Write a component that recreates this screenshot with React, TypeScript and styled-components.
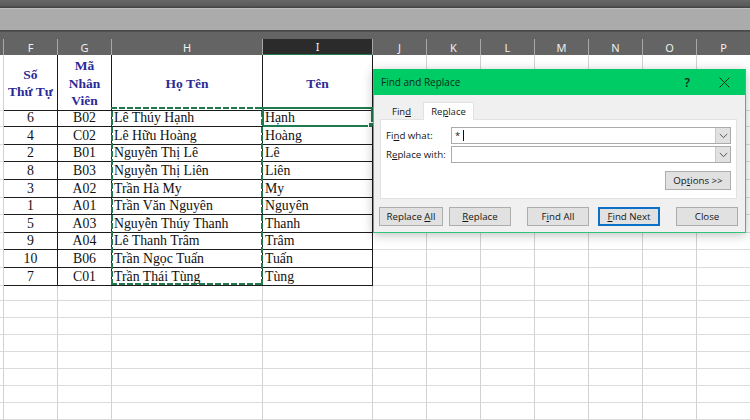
import React from 'react'
import styled, { createGlobalStyle } from 'styled-components'

const COLUMNS = '4px 54px 54px 151px 110px 54px 54px 54px 54px 54px 54px 54px'

const HEADERS = ['', 'F', 'G', 'H', 'I', 'J', 'K', 'L', 'M', 'N', 'O', 'P']

const PEOPLE = [
  ['6', 'B02', 'Lê Thúy Hạnh', 'Hạnh'],
  ['4', 'C02', 'Lê Hữu Hoàng', 'Hoàng'],
  ['2', 'B01', 'Nguyễn Thị Lê', 'Lê'],
  ['8', 'B03', 'Nguyễn Thị Liên', 'Liên'],
  ['3', 'A02', 'Trần Hà My', 'My'],
  ['1', 'A01', 'Trần Văn Nguyên', 'Nguyên'],
  ['5', 'A03', 'Nguyễn Thúy Thanh', 'Thanh'],
  ['9', 'A04', 'Lê Thanh Trâm', 'Trâm'],
  ['10', 'B06', 'Trần Ngọc Tuấn', 'Tuấn'],
  ['7', 'C01', 'Trần Thái Tùng', 'Tùng']
]

const EMPTY_COLS = [0, 1, 2, 3, 4, 5, 6]

const ChevronDown = () => (
  <svg width="9" height="6" viewBox="0 0 9 6" fill="none" stroke="#555" strokeWidth="1">
    <path d="M0.8 1 L4.5 4.6 L8.2 1" />
  </svg>
)

const CloseIcon = () => (
  <svg width="11" height="11" viewBox="0 0 11 11" fill="none" stroke="#10331f" strokeWidth="1">
    <path d="M0.5 0.5 L10.5 10.5 M10.5 0.5 L0.5 10.5" />
  </svg>
)

export default function App() {
  return (
    <Page>
      <GlobalStyle />
      <TopBar />
      <Ribbon />
      <HeaderBand>
        {HEADERS.map((h, i) => (
          <ColHead key={i} $active={h === 'I'}>{h}</ColHead>
        ))}
      </HeaderBand>

      <Sheet>
        <Row $height={53}>
          <GridCell />
          <TitleCell>Số<br />Thứ Tự</TitleCell>
          <TitleCell>Mã<br />Nhân<br />Viên</TitleCell>
          <TitleCell>Họ Tên</TitleCell>
          <TitleCell>Tên</TitleCell>
          {EMPTY_COLS.map(c => <GridCell key={c} />)}
        </Row>

        {PEOPLE.map((p, i) => (
          <Row key={p[2]} $height={17.65}>
            <GridCell />
            <DataCell $center>{p[0]}</DataCell>
            <DataCell $center>{p[1]}</DataCell>
            <DataCell>{p[2]}</DataCell>
            <DataCell>
              {p[3]}
              {i === 0 && <ActiveCell />}
            </DataCell>
            {EMPTY_COLS.map(c => <GridCell key={c} />)}
          </Row>
        ))}

        {Array.from({ length: 8 }).map((_, r) => (
          <Row key={r} $height={16.9}>
            {HEADERS.map((h, c) => <GridCell key={c} />)}
          </Row>
        ))}

        <Marquee />
      </Sheet>

      <Dialog>
        <TitleBar>
          <DialogTitle>Find and Replace</DialogTitle>
          <HelpMark>?</HelpMark>
          <CloseIcon />
        </TitleBar>

        <DialogBody>
          <Tabs>
            <Tab>Fin<u>d</u></Tab>
            <Tab $selected>Re<u>p</u>lace</Tab>
          </Tabs>

          <Panel>
            <FieldRow>
              <FieldLabel>Fi<u>n</u>d what:</FieldLabel>
              <Combo>
                <ComboText>*<Caret /></ComboText>
                <ComboArrow><ChevronDown /></ComboArrow>
              </Combo>
            </FieldRow>
            <FieldRow>
              <FieldLabel>R<u>e</u>place with:</FieldLabel>
              <Combo>
                <ComboText />
                <ComboArrow><ChevronDown /></ComboArrow>
              </Combo>
            </FieldRow>
            <OptionsRow>
              <Button $width={66}><span>Op<u>t</u>ions &gt;&gt;</span></Button>
            </OptionsRow>
          </Panel>

          <Actions>
            <Button $width={64}><span>Replace <u>A</u>ll</span></Button>
            <Button $width={62} $gap={6}><span><u>R</u>eplace</span></Button>
            <Button $width={62} $gap={16}><span>F<u>i</u>nd All</span></Button>
            <Button $width={62} $gap={9} $primary><span><u>F</u>ind Next</span></Button>
            <Button $width={62} $gap={16}>Close</Button>
          </Actions>
        </DialogBody>
      </Dialog>
    </Page>
  )
}

const GlobalStyle = createGlobalStyle`
  html, body {
    margin: 0;
    padding: 0;
    background: #ffffff;
    overflow: hidden;
  }
`

const Page = styled.div`
  position: relative;
  width: 750px;
  height: 420px;
  overflow: hidden;
  background: #ffffff;
`

const TopBar = styled.div`
  height: 8px;
  background: linear-gradient(#666666, #5a5a5a 70%, #3f3f3f);
`

const Ribbon = styled.div`
  height: 22px;
  background: #ababab;
  border-top: 1px solid #bdbdbd;
  box-sizing: border-box;
`

const HeaderBand = styled.div`
  display: grid;
  grid-template-columns: ${COLUMNS};
  height: 25px;
  padding-top: 8px;
  box-sizing: border-box;
  background: #646464;
  border-top: 1px solid #4a4a4a;
  box-shadow: inset 0 1px 0 #505050;
`

const ColHead = styled.div<{ $active?: boolean }>`
  display: flex;
  align-items: center;
  justify-content: center;
  box-sizing: border-box;
  border-right: 1px solid #a8a8a8;
  background: ${p => (p.$active ? '#2b2b2b' : 'transparent')};
  border-bottom: ${p => (p.$active ? '1px solid #1f7a4d' : 'none')};
  color: #f0f0f0;
  font: 11px "Noto Sans", sans-serif;
`

const Sheet = styled.div`
  position: relative;
`

const Row = styled.div<{ $height: number }>`
  display: grid;
  grid-template-columns: ${COLUMNS};
  height: ${p => p.$height}px;
`

const GridCell = styled.div`
  box-sizing: border-box;
  border-right: 1px solid #d2d2d2;
  border-bottom: 1px solid #dcdcdc;
`

const TitleCell = styled.div`
  display: flex;
  align-items: center;
  justify-content: center;
  box-sizing: border-box;
  padding-top: 2px;
  border-right: 1px solid #1c1c1c;
  border-bottom: 1px solid #1c1c1c;
  color: #2a2a96;
  font: bold 13.5px/17.5px "Liberation Serif", serif;
  text-align: center;
`

const DataCell = styled.div<{ $center?: boolean }>`
  position: relative;
  box-sizing: border-box;
  padding: 1px 0 0 ${p => (p.$center ? 0 : 2)}px;
  border-right: 1px solid #1c1c1c;
  border-bottom: 1px solid #1c1c1c;
  color: #111111;
  font: 13.8px/17px "Liberation Serif", serif;
  text-align: ${p => (p.$center ? 'center' : 'left')};
  white-space: nowrap;
`

const ActiveCell = styled.span`
  position: absolute;
  left: -1px;
  top: -1px;
  right: -1px;
  bottom: -1px;
  border: 2px solid #1f7a4d;

  &::after {
    content: '';
    position: absolute;
    right: -3px;
    bottom: -3px;
    width: 4px;
    height: 4px;
    background: #1f7a4d;
    border: 1px solid #ffffff;
  }
`

const Marquee = styled.div`
  position: absolute;
  left: 111px;
  top: 52px;
  width: 152px;
  height: 178px;
  pointer-events: none;
  background:
    repeating-linear-gradient(90deg, #1f7a4d 0 6px, transparent 6px 8px) top / 100% 2px no-repeat,
    repeating-linear-gradient(90deg, #1f7a4d 0 6px, transparent 6px 8px) bottom / 100% 2px no-repeat,
    repeating-linear-gradient(0deg, #1f7a4d 0 6px, transparent 6px 8px) left / 2px 100% no-repeat,
    repeating-linear-gradient(0deg, #1f7a4d 0 6px, transparent 6px 8px) right / 2px 100% no-repeat;
`

const Dialog = styled.div`
  position: absolute;
  left: 373px;
  top: 69px;
  width: 373px;
  height: 164px;
  box-sizing: border-box;
  border: 1px solid #2fc47c;
  border-top: none;
  background: #f0f0f0;
  box-shadow: 0 2px 10px rgba(0, 0, 0, 0.25);
  font-family: "Open Sans", "Noto Sans", sans-serif;
  color: #161616;
`

const TitleBar = styled.div`
  display: flex;
  align-items: center;
  height: 26px;
  padding: 0 15px 0 7px;
  background: #00cc66;
`

const DialogTitle = styled.div`
  flex: 1;
  font-size: 10px;
  color: #0c2a19;
`

const HelpMark = styled.div`
  margin-right: 29px;
  font-size: 12px;
  font-weight: 600;
  color: #0c2a19;
`

const DialogBody = styled.div`
  padding: 7px 7px 0 5px;
`

const Tabs = styled.div`
  display: flex;
  height: 17px;
  margin-left: 1px;
`

const Tab = styled.div<{ $selected?: boolean }>`
  display: flex;
  align-items: center;
  justify-content: center;
  box-sizing: border-box;
  width: ${p => (p.$selected ? 51 : 43)}px;
  height: ${p => (p.$selected ? 18 : 17)}px;
  background: ${p => (p.$selected ? '#ffffff' : 'transparent')};
  border: 1px solid ${p => (p.$selected ? '#e2e2e2' : 'transparent')};
  border-bottom: none;
  font-size: 9.5px;
  position: relative;
  z-index: 1;
`

const Panel = styled.div`
  box-sizing: border-box;
  width: 357px;
  height: 80px;
  margin-left: 1px;
  padding: 7px 5px 0 5px;
  background: #ffffff;
  border: 1px solid #e2e2e2;
`

const FieldRow = styled.div`
  display: flex;
  align-items: center;
  height: 17px;
  margin-bottom: 2px;
`

const FieldLabel = styled.div`
  width: 65px;
  font-size: 9.7px;
`

const Combo = styled.div`
  flex: 1;
  display: flex;
  box-sizing: border-box;
  height: 17px;
  border: 1px solid #ababab;
  background: #ffffff;
`

const ComboText = styled.div`
  flex: 1;
  display: flex;
  align-items: center;
  padding-left: 3px;
  font-size: 9.5px;
`

const Caret = styled.span`
  display: inline-block;
  width: 1px;
  height: 11px;
  margin-left: 3px;
  background: #111111;
`

const ComboArrow = styled.div`
  display: flex;
  align-items: center;
  justify-content: center;
  width: 14px;
  background: #e1e1e1;
  border-left: 1px solid #c8c8c8;
`

const OptionsRow = styled.div`
  display: flex;
  justify-content: flex-end;
  margin-top: 8px;
`

const Actions = styled.div`
  display: flex;
  margin-top: 8px;
`

const Button = styled.div<{ $width: number, $gap?: number, $primary?: boolean }>`
  display: flex;
  align-items: center;
  justify-content: center;
  box-sizing: border-box;
  width: ${p => p.$width}px;
  height: 19px;
  margin-left: ${p => p.$gap || 0}px;
  background: #e1e1e1;
  border: 1px solid ${p => (p.$primary ? '#0a70c8' : '#adadad')};
  box-shadow: ${p => (p.$primary ? 'inset 0 0 0 1px #0a70c8' : 'none')};
  font-size: 9.7px;
  white-space: nowrap;
`
